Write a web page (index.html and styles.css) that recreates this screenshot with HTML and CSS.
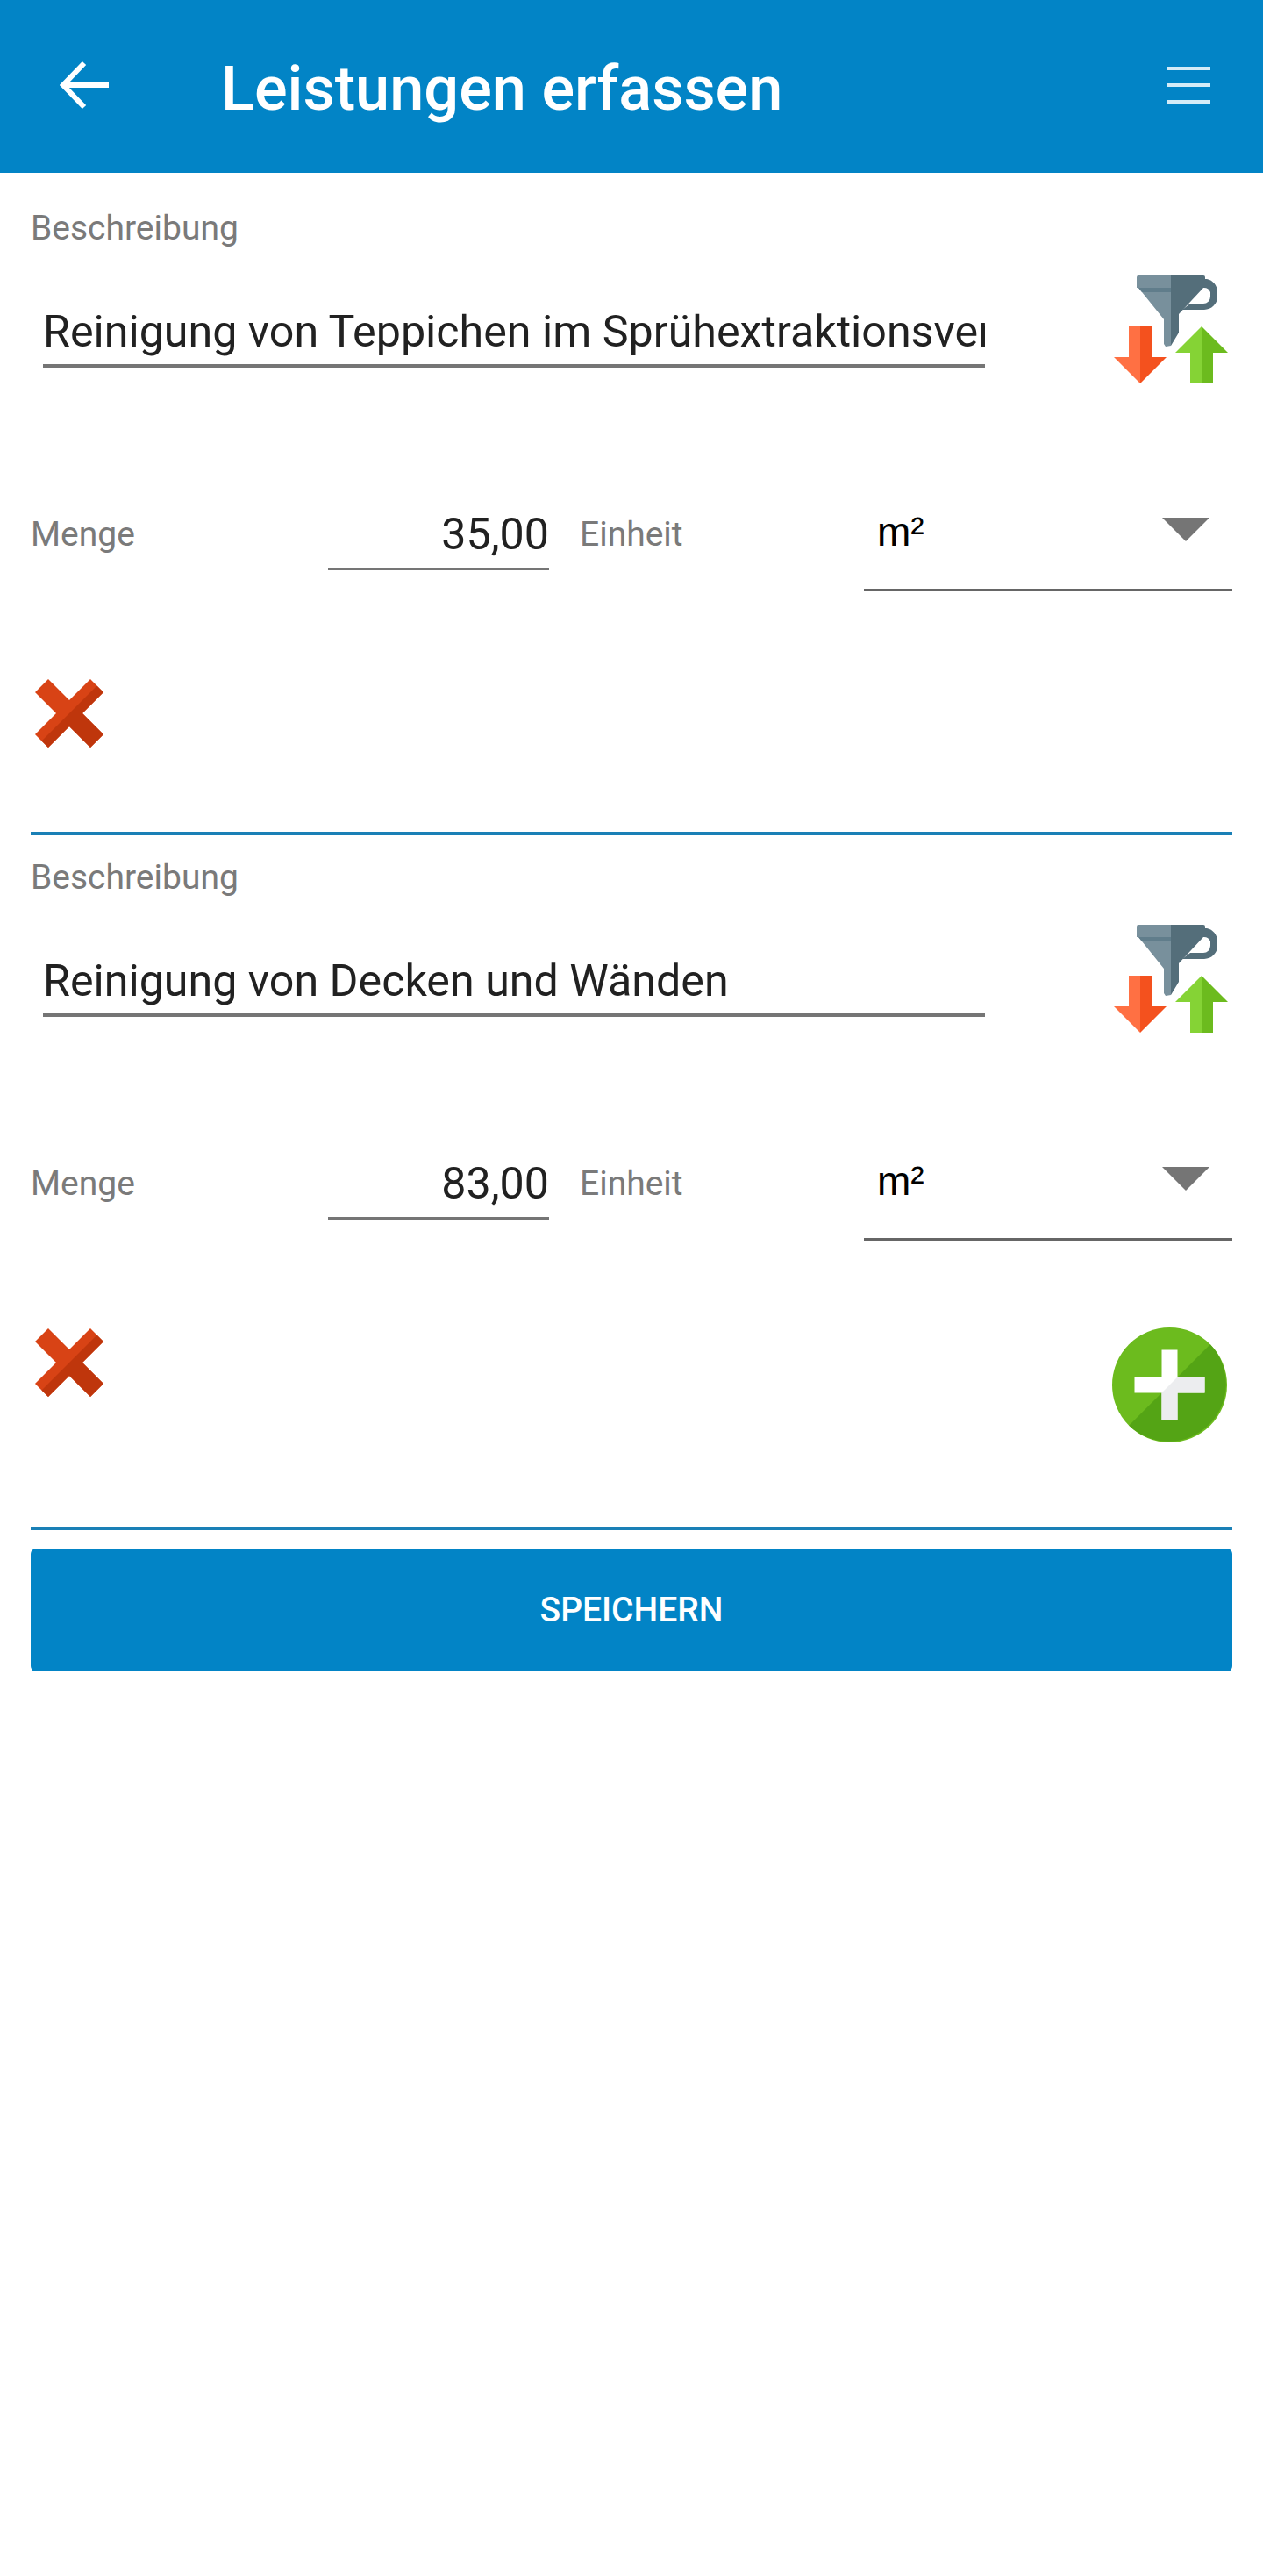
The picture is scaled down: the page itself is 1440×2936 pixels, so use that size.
FILE: index.html
```html
<!DOCTYPE html>
<html lang="de">
<head>
<meta charset="utf-8">
<title>Leistungen erfassen</title>
<link rel="stylesheet" href="styles.css">
</head>
<body>
<svg class="defs" width="0" height="0" aria-hidden="true">
  <symbol id="filter-icon" viewBox="0 0 130 123">
    <path fill="#546E7A" d="M104 4h2a15 15 0 0 1 12 15v5a15 15 0 0 1-15 15H78l9-7h15a8 8 0 0 0 8-8v-5a8 8 0 0 0-8-5h-2z"/>
    <path fill="#78909C" d="M28 0h37v14H26V2a2 2 0 0 1 2-2z"/>
    <path fill="#546E7A" d="M65 0h37a2 2 0 0 1 2 2v12H65z"/>
    <path fill="#78909C" d="M28 14h37v66l-6 1-2-3V50z"/>
    <path fill="#546E7A" d="M65 14h37L74 44v21L65 80z"/>
    <path fill="#607D8B" d="M28 14h37v5H32z"/>
    <path fill="#FF7043" d="M17 58h13v65L0 93h17z"/>
    <path fill="#F4511E" d="M30 58h13v35h17l-30 30z"/>
    <path fill="#85D335" d="M100 58v65H87V88H70z"/>
    <path fill="#6CBB1E" d="M100 58l30 30h-17v35h-13z"/>
  </symbol>
  <symbol id="delete-icon" viewBox="0 0 78 78">
    <path fill="#D84315" d="M15 0l24 24L63 0l15 15-24 24 24 24-15 15-24-24-24 24L0 63l24-24L0 15z"/>
    <path fill="#BF360C" d="M70.5 7.5L78 15 54 39l24 24-15 15-24-24-24 24-7.500-7.500z"/>
  </symbol>
</svg>

<header class="app-bar">
  <svg class="back" viewBox="0 0 56 56" aria-hidden="true"><path d="M56 28H4M28 3L4 28l24 25" fill="none" stroke="#fff" stroke-width="6"/></svg>
  <h1 class="title">Leistungen erfassen</h1>
  <svg class="menu" viewBox="0 0 49 42" aria-hidden="true"><path d="M0 2h49M0 21h49M0 40h49" fill="none" stroke="#d4ebf7" stroke-width="4"/></svg>
</header>

<main class="form">
  <section class="entry">
    <div class="label">Beschreibung</div>
    <div class="desc-row">
      <div class="desc-field">Reinigung von Teppichen im Sprühextraktionsverfahren</div>
      <svg class="filter"><use href="#filter-icon"/></svg>
    </div>
    <div class="qty-row">
      <div class="label qty-label">Menge</div>
      <div class="qty-field">35,00</div>
      <div class="label unit-label">Einheit</div>
      <div class="select"><span>m²</span><i class="caret"></i></div>
    </div>
    <div class="actions">
      <svg class="delete"><use href="#delete-icon"/></svg>
    </div>
  </section>

  <section class="entry">
    <div class="label">Beschreibung</div>
    <div class="desc-row">
      <div class="desc-field">Reinigung von Decken und Wänden</div>
      <svg class="filter"><use href="#filter-icon"/></svg>
    </div>
    <div class="qty-row">
      <div class="label qty-label">Menge</div>
      <div class="qty-field">83,00</div>
      <div class="label unit-label">Einheit</div>
      <div class="select"><span>m²</span><i class="caret"></i></div>
    </div>
    <div class="actions">
      <svg class="delete"><use href="#delete-icon"/></svg>
      <svg class="add" viewBox="0 0 131 131" aria-hidden="true">
        <circle cx="65.500" cy="65.500" r="65.500" fill="#6CBB1E"/>
        <path fill="#54A415" d="M111.800 19.200A65.500 65.500 0 0 1 19.200 111.800z"/>
        <path fill="#fff" d="M56.500 25.500h18v31h31v18h-31v31h-18v-31h-31v-18h31z"/>
        <path fill="#ECEDEF" d="M74.500 56.500h31v18h-31v31h-18v-31z"/>
      </svg>
    </div>
  </section>

  <button class="save" type="button">SPEICHERN</button>
</main>
</body>
</html>
```

FILE: styles.css
```css
* { box-sizing: border-box; }

html, body { margin: 0; padding: 0; background: #fff; }

body {
  font-family: Roboto, "Noto Sans", sans-serif;
  min-height: 2936px;
}

.defs { position: absolute; }

.app-bar {
  display: flex;
  align-items: center;
  height: 197px;
  background: #0284c6;
  padding: 0 60px 0 68px;
}

.back { width: 56px; height: 56px; flex: none; margin-top: -3px; }

.title {
  margin: 0 0 -4px 128px;
  flex: 1;
  font-size: 70.300px;
  font-weight: 500;
  line-height: 80px;
  color: #fff;
}

.menu { width: 49px; height: 42px; flex: none; margin-top: -3px; }

.form { padding: 15px 35px 0; }

.entry {
  padding: 26px 0 96px;
  border-bottom: 4px solid #1a80b6;
}

.label {
  font-size: 39px;
  line-height: 44px;
  color: #7a7a7a;
}

.desc-row {
  display: flex;
  justify-content: space-between;
  align-items: flex-start;
  margin-top: 32px;
  padding: 0 5px 0 14px;
}

.desc-field {
  width: 1074px;
  margin-top: 34px;
  padding: 0 0 7px 0;
  overflow: hidden;
  white-space: nowrap;
  font-size: 50.200px;
  line-height: 60px;
  color: #212121;
  border-bottom: 4px solid #757575;
}

.filter { width: 130px; height: 123px; flex: none; }

.qty-row {
  display: flex;
  align-items: flex-start;
  margin-top: 142px;
}

.qty-label { width: 339px; margin-top: 8px; }

.qty-field {
  width: 252px;
  padding: 0 0 8px 0;
  text-align: right;
  font-size: 50.200px;
  line-height: 60px;
  color: #212121;
  border-bottom: 3px solid #757575;
}

.unit-label { width: 324px; margin: 8px 0 0 35px; }

.select {
  display: flex;
  justify-content: space-between;
  align-items: flex-start;
  width: 420px;
  height: 95px;
  padding: 0 26px 0 15px;
  font-family: "Liberation Sans", Arial, sans-serif;
  font-size: 46px;
  line-height: 54px;
  color: #000;
  border-bottom: 3px solid #666;
}

.caret {
  width: 0;
  height: 0;
  margin-top: 11px;
  border-left: 27px solid transparent;
  border-right: 27px solid transparent;
  border-top: 27px solid #757575;
}

.actions {
  display: flex;
  justify-content: space-between;
  align-items: flex-start;
  margin-top: 99px;
  padding: 0 6px 0 5px;
}

.delete { width: 78px; height: 78px; flex: none; margin-top: 1px; }

.add { width: 131px; height: 131px; flex: none; }

.save {
  display: block;
  width: 100%;
  height: 140px;
  margin-top: 21px;
  border: 0;
  border-radius: 6px;
  background: #0284c6;
  color: #fff;
  font-family: Roboto, sans-serif;
  font-size: 39px;
  font-weight: 500;
}
```
